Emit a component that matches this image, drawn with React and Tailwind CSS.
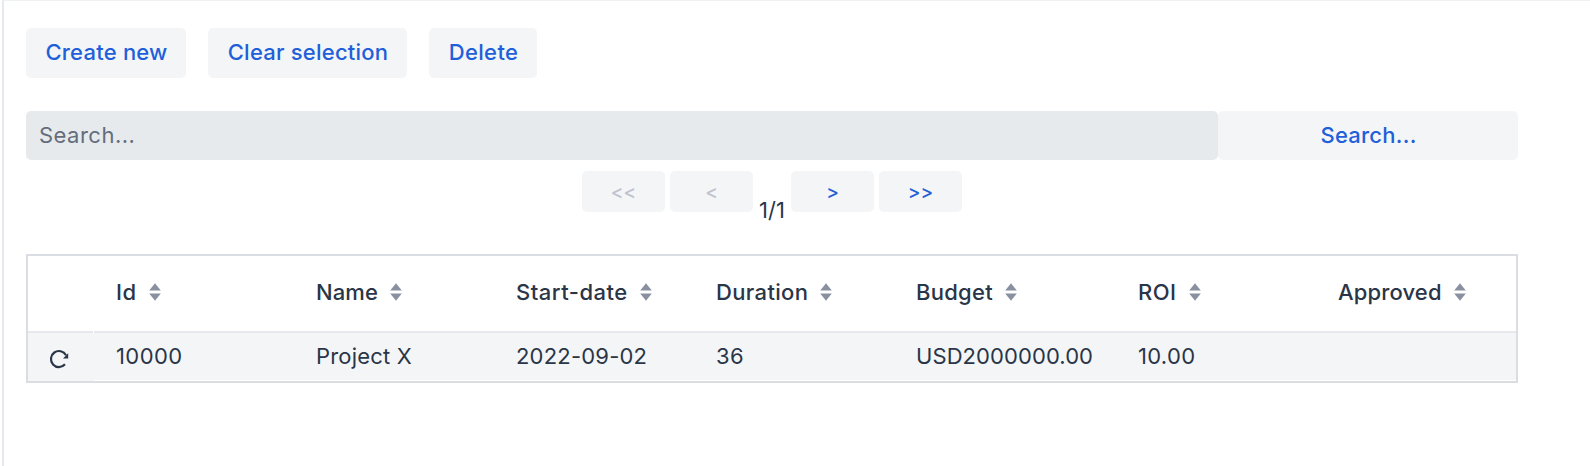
const columns = [
  { label: 'Id', value: '10000', cell: 'w-[200px]', head: 'tracking-[0.6px]', tracking: 'tracking-[0.4px]' },
  { label: 'Name', value: 'Project X', cell: 'w-[200px]', head: 'tracking-[0.1px]', tracking: 'tracking-[0.2px]' },
  { label: 'Start-date', value: '2022-09-02', cell: 'w-[200px]', head: 'tracking-[0.5px]', tracking: 'tracking-[0.2px]' },
  { label: 'Duration', value: '36', cell: 'w-[200px]', head: 'tracking-[0.34px]', tracking: 'tracking-[0.4px]' },
  { label: 'Budget', value: 'USD2000000.00', cell: 'w-[222px]', head: 'tracking-[0.28px]', tracking: 'tracking-[0.08px]' },
  { label: 'ROI', value: '10.00', cell: 'w-[200px]', head: 'tracking-[0.5px]', tracking: 'tracking-[0.3px]' },
  { label: 'Approved', value: '', cell: 'w-[178px]', head: 'tracking-[0.14px]', tracking: '' },
];

function Button({ className, children, disabled }) {
  return (
    <button
      disabled={disabled}
      className={`flex items-center justify-center whitespace-nowrap rounded-[5px] bg-[#f3f5f7] text-[#1f5fd9] disabled:text-[#bec3cf] ${className}`}
    >
      {children}
    </button>
  );
}

function SortIcon() {
  return (
    <svg width="12" height="18" viewBox="0 0 12 18" className="shrink-0" fill="#8991a1">
      <path d="M6 0.3 L11.8 7.6 H0.2 Z" />
      <path d="M0.2 10.4 H11.8 L6 17.7 Z" />
    </svg>
  );
}

function ReloadIcon() {
  return (
    <svg width="20" height="20" viewBox="0 0 20 20" fill="none">
      <path d="M16 15.3 A8 8 0 1 1 17 6.2" stroke="#2a3547" strokeWidth="2.2" />
      <path d="M19.2 4.2 V9.4 H14 Z" fill="#2a3547" />
    </svg>
  );
}

export default function App() {
  return (
    <div className="h-[466px] w-full bg-white pl-[2px] font-['Inter',sans-serif] text-[22px] leading-[26px] text-[#2a3547]">
      <div className="h-full border-l-2 border-t border-l-[#e6eaee] border-t-[#f0f1f3] pl-[22px] pt-[27px]">
        <div className="flex gap-[22px]">
          <Button className="h-[50px] w-[160px] pb-[2px] pl-px font-[480] tracking-[0.22px]">Create new</Button>
          <Button className="h-[50px] w-[199px] pb-[2px] pl-px font-[480] tracking-[0.22px]">Clear selection</Button>
          <Button className="h-[50px] w-[108px] pb-[2px] pl-px font-[480] tracking-[0.35px]">Delete</Button>
        </div>

        <div className="mt-[33px] flex">
          <input
            placeholder="Search..."
            className="h-[49px] w-[1192px] rounded-[5px] bg-[#e6eaed] px-[13px] pb-[2px] tracking-[0.48px] placeholder:text-[#636d7c]"
          />
          <Button className="h-[49px] w-[300px] pb-[2px] pl-px font-[480] tracking-[0.25px]">Search...</Button>
        </div>

        <div className="mt-[11px] flex h-[83px] w-[1492px] items-start justify-center">
          <Button disabled className="h-[41px] w-[83px] pt-[2px] text-[19px] font-[480]">{'<<'}</Button>
          <Button disabled className="ml-[5px] h-[41px] w-[83px] pt-[2px] text-[19px] font-[480]">{'<'}</Button>
          <span className="mt-[26px] w-[38px] text-center">1/1</span>
          <Button className="h-[41px] w-[83px] pt-[2px] text-[19px] font-medium">{'>'}</Button>
          <Button className="ml-[5px] h-[41px] w-[83px] pt-[2px] text-[19px] font-medium">{'>>'}</Button>
        </div>

        <div className="w-[1492px] border-2 border-[#dadee3]">
          <div className="flex h-[77px]">
            <div className="w-[65px] shrink-0 border-b-2 border-[#e6e8ec]" />
            <div className="ml-px flex flex-1 items-center border-b-2 border-[#e6e8ec] pb-[3px] font-medium">
              {columns.map((c) => (
                <div key={c.label} className={`flex shrink-0 items-center gap-[12px] pl-[22px] ${c.cell} ${c.head}`}>
                  <span>{c.label}</span>
                  <SortIcon />
                </div>
              ))}
            </div>
          </div>
          <div className="flex h-[48px] bg-[#f3f5f7]">
            <div className="w-[66px] shrink-0 pl-[21px] pt-[16px]">
              <ReloadIcon />
            </div>
            <div className="flex flex-1 items-center border-b border-white pb-[2px]">
              {columns.map((c) => (
                <div key={c.label} className={`shrink-0 pl-[22px] ${c.cell} ${c.tracking}`}>{c.value}</div>
              ))}
            </div>
          </div>
        </div>
      </div>
    </div>
  );
}
